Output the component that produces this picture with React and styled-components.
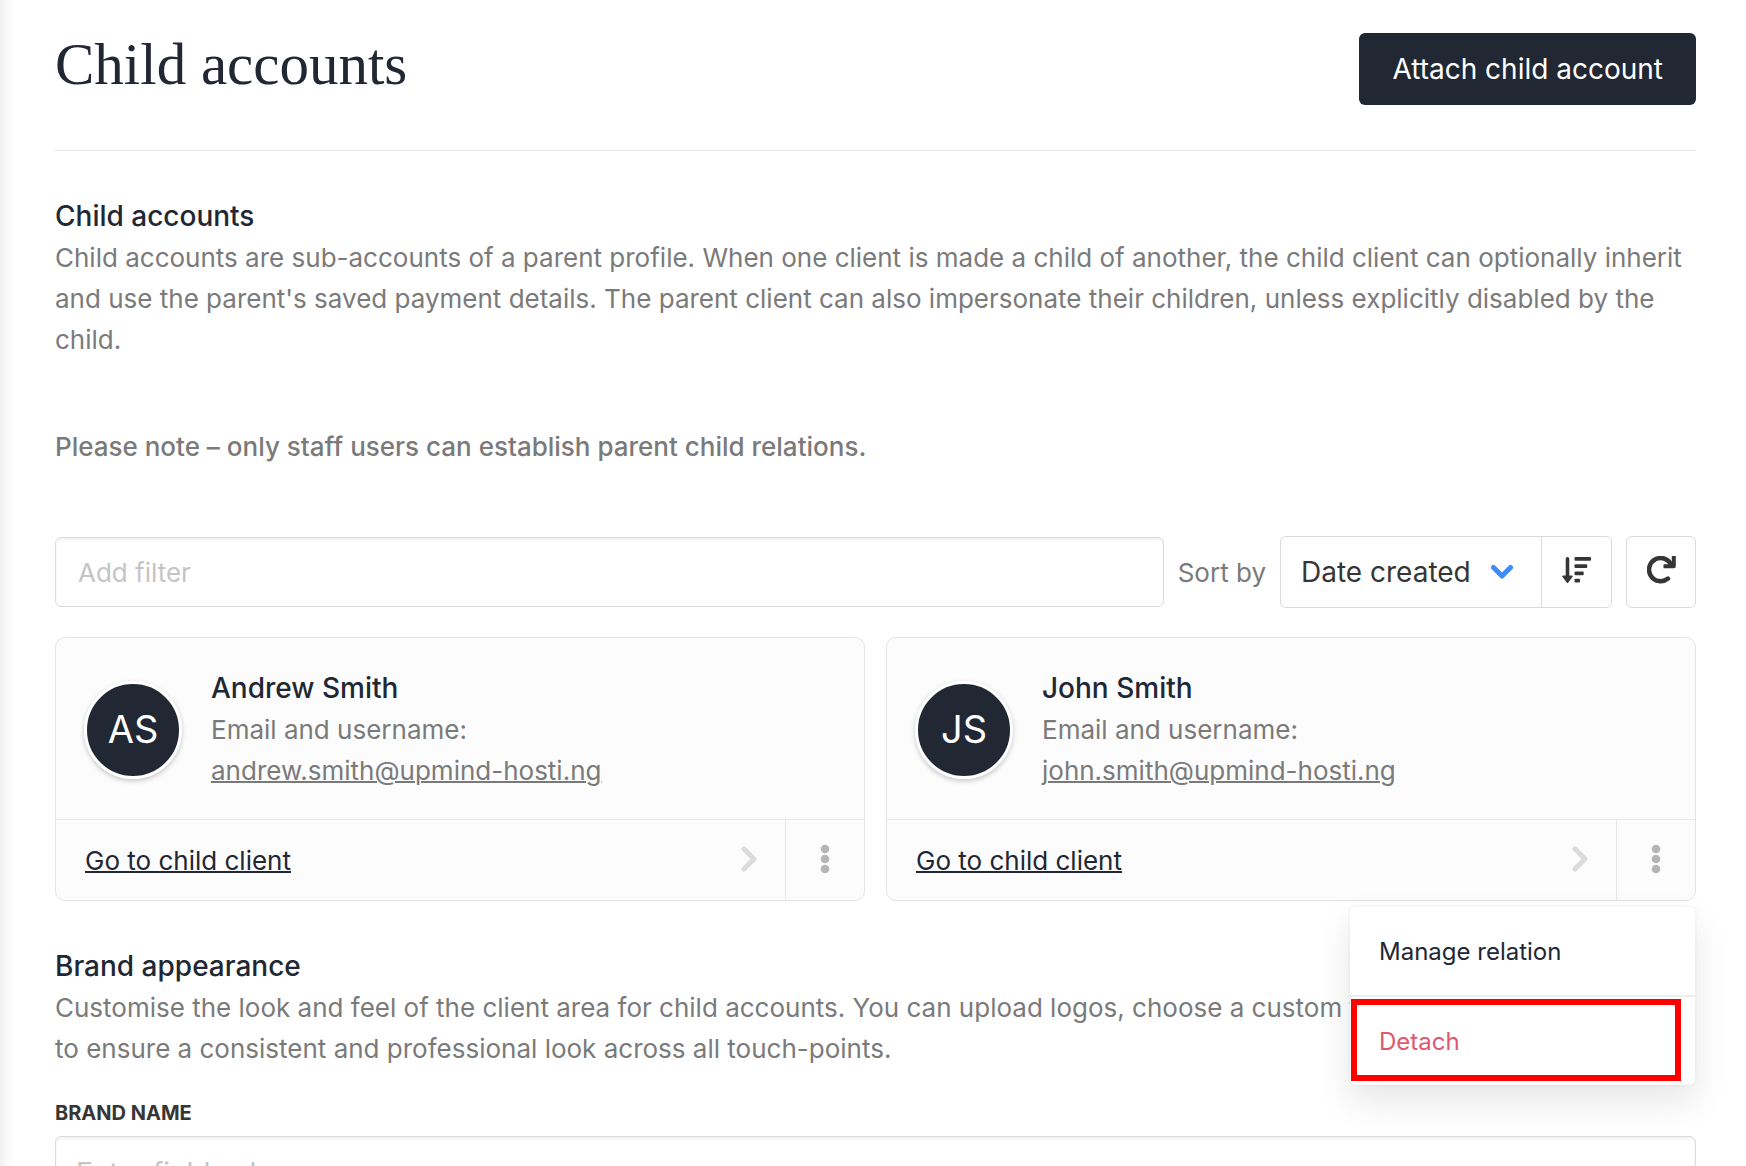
import styled, { createGlobalStyle, css } from 'styled-components'

const GlobalStyle = createGlobalStyle`
  * {
    box-sizing: border-box;
  }
  body {
    margin: 0;
    background-color: #fff;
    color: #7a7a7a;
    font-family: Inter, 'Liberation Sans', sans-serif;
    font-size: 26px;
    line-height: 41px;
  }
  button,
  input,
  select {
    font: inherit;
  }
  h1, h2, h3, p {
    margin: 0;
  }
`

const Page = styled.main`
  height: 100vh;
  overflow: hidden auto;
  scrollbar-width: none;
  padding: 33px 50px 48px 55px;
  box-shadow: inset 16px 0 16px -16px rgba(0, 0, 0, 0.12);
`

const Header = styled.header`
  display: flex;
  align-items: flex-start;
  justify-content: space-between;
  padding-bottom: 45px;
  margin-bottom: 45px;
  border-bottom: 1px solid #e8e8e8;
`

const Title = styled.h1`
  font-family: 'Liberation Serif', serif;
  font-size: 59px;
  font-weight: 400;
  line-height: 62px;
  color: #212733;
`

const PrimaryButton = styled.button`
  height: 72px;
  padding: 0 33px;
  border: 0;
  border-radius: 6px;
  background-color: #212733;
  color: #fff;
  font-size: 28px;
`

const Heading = styled.h2`
  font-size: 28px;
  font-weight: 500;
  line-height: 41px;
  color: #212733;
`

const Note = styled.p`
  margin: 66px 0 69px;
  font-weight: 500;
`

const Toolbar = styled.div`
  display: flex;
  align-items: center;
  gap: 14px;
  margin-bottom: 29px;
`

const fieldStyle = css`
  height: 70px;
  border: 1px solid #dbdbdb;
  border-radius: 6px;
  background-color: #fff;
  box-shadow: inset 0 2px 3px rgba(10, 10, 10, 0.06);
  color: #363636;
  &::placeholder {
    color: #c4c4c4;
    opacity: 1;
  }
`

const FilterInput = styled.input`
  ${fieldStyle}
  flex: 1;
  min-width: 0;
  padding: 0 22px;
`

const BrandInput = styled.input`
  ${fieldStyle}
  width: 100%;
  height: 74px;
  padding: 0 20px;
  font-size: 28px;
`

const SortGroup = styled.div`
  display: flex;
  height: 72px;
  border: 1px solid #dbdbdb;
  border-radius: 6px;
`

const SelectWrap = styled.div`
  position: relative;
  display: flex;
  svg {
    position: absolute;
    right: 27px;
    top: 50%;
    margin-top: -8px;
    pointer-events: none;
  }
`

const Select = styled.select`
  appearance: none;
  width: 260px;
  padding: 0 20px;
  border: 0;
  background: none;
  color: #363636;
  font-size: 28px;
`

const IconButton = styled.button`
  display: flex;
  align-items: center;
  justify-content: center;
  width: 70px;
  padding: 0 0 4px;
  border: 0;
  border-left: 1px solid #dbdbdb;
  background: none;
  color: #363636;
`

const RefreshButton = styled(IconButton)`
  height: 72px;
  border: 1px solid #dbdbdb;
  border-radius: 6px;
`

const Cards = styled.div`
  display: grid;
  grid-template-columns: 1fr 1fr;
  gap: 21px;
  margin-bottom: 45px;
`

const Card = styled.article`
  position: relative;
  border: 1px solid #e4e4e4;
  border-radius: 10px;
  background-color: #fcfcfc;
`

const CardBody = styled.div`
  display: flex;
  align-items: center;
  gap: 29px;
  padding: 30px 28px 28px;
`

const Avatar = styled.div`
  display: flex;
  align-items: center;
  justify-content: center;
  width: 98px;
  height: 98px;
  border: 3px solid #fff;
  border-radius: 50%;
  background-color: #212733;
  box-shadow: 0 2px 5px rgba(0, 0, 0, 0.22);
  color: #fff;
  font-size: 38px;
`

const Email = styled.a`
  display: block;
  color: inherit;
  text-decoration: underline;
  text-decoration-thickness: 2px;
`

const CardFooter = styled.div`
  display: flex;
  height: 81px;
  border-top: 1px solid #e8e8e8;
`

const ClientLink = styled.a`
  display: flex;
  flex: 1;
  align-items: center;
  justify-content: space-between;
  padding: 0 28px 0 29px;
  color: #212733;
  text-decoration: underline;
  text-decoration-thickness: 2px;
`

const MoreButton = styled.button`
  display: flex;
  align-items: center;
  justify-content: center;
  width: 79px;
  padding: 0 0 2px;
  border: 0;
  border-left: 1px solid #e8e8e8;
  background: none;
`

const Menu = styled.div`
  position: absolute;
  top: 100%;
  right: 0;
  z-index: 1;
  width: 345px;
  margin-top: 7px;
  border-radius: 6px;
  background-color: #fff;
  box-shadow: 0 16px 36px rgba(10, 10, 10, 0.1), 0 0 0 2px rgba(10, 10, 10, 0.02);
`

const MenuItem = styled.button`
  display: block;
  width: 100%;
  height: 88px;
  padding: 0 29px;
  border: 0;
  background: none;
  color: ${props => (props.$danger ? '#e0566f' : '#212733')};
  font-size: 24px;
  text-align: left;
  & + & {
    height: 90px;
    border-top: 2px solid #ededed;
  }
`

const Highlight = styled.span`
  position: absolute;
  left: 1px;
  right: 14px;
  bottom: 4px;
  height: 82px;
  border: 6px solid #f00;
  pointer-events: none;
`

const FieldLabel = styled.label`
  display: block;
  margin: 30px 0 9px;
  color: #363636;
  font-size: 20px;
  font-weight: 700;
  line-height: 28px;
  text-transform: uppercase;
`

const ChevronDown = () => (
  <svg
    width='24'
    height='16'
    viewBox='0 0 24 16'
    fill='none'
    stroke='#3d8bfd'
    strokeWidth='5'
    strokeLinecap='round'
    strokeLinejoin='round'
  >
    <path d='M3.500 3.500l8.500 8.500 8.500-8.500' />
  </svg>
)

const ChevronRight = () => (
  <svg
    width='16'
    height='28'
    viewBox='0 0 16 28'
    fill='none'
    stroke='#dbdbdb'
    strokeWidth='5'
    strokeLinecap='round'
    strokeLinejoin='round'
  >
    <path d='M3 3l10 10L3 23' />
  </svg>
)

const SortIcon = () => (
  <svg width='29' height='26' viewBox='0 0 29 26' fill='currentColor'>
    <path d='M5.500 0a1.800 1.800 0 0 1 1.800 1.800V18.500h2.700a.8.8 0 0 1 .6 1.300l-4.300 5.600a1 1 0 0 1-1.600 0L.4 19.800a.8.8 0 0 1 .6-1.300h2.700V1.800A1.800 1.800 0 0 1 5.500 0z' />
    <rect x='12.500' y='0' width='16.500' height='3.700' rx='1' />
    <rect x='12.500' y='7.300' width='12.700' height='3.700' rx='1' />
    <rect x='12.500' y='14.600' width='9.200' height='3.700' rx='1' />
    <rect x='12.500' y='21.800' width='5.500' height='3.700' rx='1' />
  </svg>
)

const RefreshIcon = () => (
  <svg width='29' height='28' viewBox='0 0 29 28' fill='none' stroke='currentColor' strokeWidth='4.500'>
    <path d='M21 22.600A11.600 11.600 0 1 1 24.500 9.500' strokeLinecap='round' />
    <path d='M26.800 0v10.200H16.500' strokeWidth='4' strokeLinejoin='round' />
  </svg>
)

const Dots = () => (
  <svg width='10' height='30' viewBox='0 0 10 30' fill='#b5b5b5'>
    <circle cx='5' cy='5' r='4.300' />
    <circle cx='5' cy='15' r='4.300' />
    <circle cx='5' cy='25' r='4.300' />
  </svg>
)

const clients = [
  { initials: 'AS', name: 'Andrew Smith', email: 'andrew.smith@upmind-hosti.ng' },
  { initials: 'JS', name: 'John Smith', email: 'john.smith@upmind-hosti.ng', menuOpen: true }
]

const ClientCard = ({ client }) => (
  <Card>
    <CardBody>
      <Avatar>{client.initials}</Avatar>
      <div>
        <Heading as='h3'>{client.name}</Heading>
        <p>Email and username:</p>
        <Email href={`mailto:${client.email}`}>{client.email}</Email>
      </div>
    </CardBody>
    <CardFooter>
      <ClientLink href='#client'>
        Go to child client
        <ChevronRight />
      </ClientLink>
      <MoreButton aria-label='More actions'>
        <Dots />
      </MoreButton>
    </CardFooter>
    {client.menuOpen && (
      <Menu>
        <MenuItem>Manage relation</MenuItem>
        <MenuItem $danger>Detach</MenuItem>
        <Highlight />
      </Menu>
    )}
  </Card>
)

export default () => {
  return (
    <>
      <GlobalStyle />
      <Page>
        <Header>
          <Title>Child accounts</Title>
          <PrimaryButton>Attach child account</PrimaryButton>
        </Header>
        <Heading>Child accounts</Heading>
        <p>
          Child accounts are sub-accounts of a parent profile. When one client is made a child of
          another, the child client can optionally inherit and use the parent's saved payment
          details. The parent client can also impersonate their children, unless explicitly
          disabled by the child.
        </p>
        <Note>Please note – only staff users can establish parent child relations.</Note>
        <Toolbar>
          <FilterInput aria-label='Add filter' placeholder='Add filter' />
          <label htmlFor='sort'>Sort by</label>
          <SortGroup>
            <SelectWrap>
              <Select id='sort'>
                <option>Date created</option>
              </Select>
              <ChevronDown />
            </SelectWrap>
            <IconButton aria-label='Sort direction'>
              <SortIcon />
            </IconButton>
          </SortGroup>
          <RefreshButton aria-label='Refresh'>
            <RefreshIcon />
          </RefreshButton>
        </Toolbar>
        <Cards>
          {clients.map(client => (
            <ClientCard key={client.email} client={client} />
          ))}
        </Cards>
        <Heading>Brand appearance</Heading>
        <p>
          Customise the look and feel of the client area for child accounts. You can upload logos,
          choose a custom theme
          <br />
          to ensure a consistent and professional look across all touch-points.
        </p>
        <FieldLabel htmlFor='brand-name'>Brand name</FieldLabel>
        <BrandInput id='brand-name' placeholder='Enter field value' />
      </Page>
    </>
  )
}
